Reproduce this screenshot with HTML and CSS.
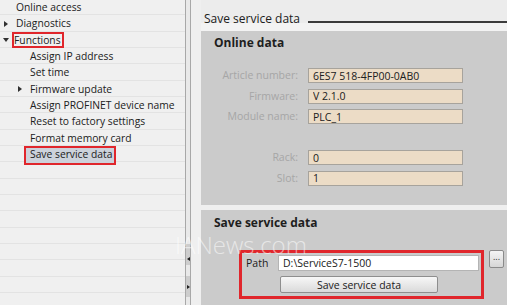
FILE: index.html
```html
<!DOCTYPE html>
<html lang="en">
<head>
    <meta charset="UTF-8">
    <title>Save service data</title>
    <link rel="stylesheet" href="styles.css">
</head>
<body>
<div class="tree">
    <div class="row l0">Online access</div>
    <div class="row l0"><span class="caret right"></span>Diagnostics</div>
    <div class="row l0"><span class="caret down"></span><span class="mark">Functions</span></div>
    <div class="row l1">Assign IP address</div>
    <div class="row l1">Set time</div>
    <div class="row l1"><span class="caret right"></span>Firmware update</div>
    <div class="row l1">Assign PROFINET device name</div>
    <div class="row l1">Reset to factory settings</div>
    <div class="row l1">Format memory card</div>
    <div class="row l1"><span class="mark selected">Save service data</span></div>
</div>
<div class="splitter">
    <div class="grip"><span class="arrow left"></span></div>
    <div class="grip"><span class="arrow right"></span></div>
</div>
<div class="main">
    <div class="title">
        <span>Save service data</span>
        <span class="rule"></span>
    </div>
    <div class="box online">
        <h2>Online data</h2>
        <div class="fields">
            <label>Article number:</label>
            <input type="text" class="field" value="6ES7 518-4FP00-0AB0" readonly>
            <label>Firmware:</label>
            <input type="text" class="field" value="V 2.1.0" readonly>
            <label>Module name:</label>
            <input type="text" class="field" value="PLC_1" readonly>
            <div class="blank"></div>
            <div class="blank"></div>
            <label>Rack:</label>
            <input type="text" class="field" value="0" readonly>
            <label>Slot:</label>
            <input type="text" class="field" value="1" readonly>
        </div>
    </div>
    <div class="box service">
        <h2>Save service data</h2>
        <div class="save-row">
            <div class="highlight">
                <div class="path-row">
                    <label>Path</label>
                    <input type="text" class="path" value="D:\ServiceS7-1500">
                </div>
                <button type="button" class="btn-save">Save service data</button>
            </div>
            <button type="button" class="btn-browse">...</button>
        </div>
    </div>
</div>
<div class="watermark">IANews.com</div>
</body>
</html>
```

FILE: styles.css
```css
body {
    margin: 0;
    width: 507px;
    height: 305px;
    overflow: hidden;
    display: flex;
    font-family: "Open Sans", Arial, sans-serif;
    font-size: 10.5px;
    color: #202020;
    position: relative;
}

.tree {
    width: 185px;
    flex-shrink: 0;
    font-size: 10.3px;
    background: repeating-linear-gradient(to bottom, #f0f0f0 0, #f0f0f0 15.3px, #e3e3e3 15.3px, #e3e3e3 16.33px);
    background-position: 0 -1px;
}

.row {
    height: 16.33px;
    line-height: 16.33px;
    white-space: nowrap;
    position: relative;
    top: -1px;
}

.row.l0 {
    padding-left: 16px;
}

.row.l1 {
    padding-left: 30px;
}

.caret {
    display: inline-block;
    width: 0;
    height: 0;
    vertical-align: middle;
    border-style: solid;
    border-color: transparent;
}

.caret.right {
    border-width: 3.5px 0 3.5px 4px;
    border-left-color: #303030;
    margin: 0 8px 2px -12px;
}

.caret.down {
    border-width: 4px 3px 0 3px;
    border-top-color: #303030;
    margin: 0 7px 2px -13px;
}

.mark {
    display: inline-block;
    height: 16.33px;
    padding: 0 3px 0 2px;
    margin-left: -4px;
    box-shadow: inset 0 0 0 2px #e0262c;
}

.mark.selected {
    padding: 0 4px 0 6px;
    margin-left: -6px;
    height: 19px;
    line-height: 17px;
    margin-top: -1px;
    background: #ccd2db;
}

.splitter {
    width: 4px;
    flex-shrink: 0;
    background: #e9e9e9;
    border-left: 1px solid #a8a8a8;
    border-right: 1px solid #a8a8a8;
    display: flex;
    flex-direction: column;
    justify-content: flex-end;
    gap: 11px;
    padding-bottom: 8px;
}

.grip {
    height: 21px;
    background: #cdcdcd;
    display: flex;
    align-items: flex-end;
    justify-content: center;
    padding-bottom: 4px;
    box-sizing: border-box;
}

.arrow {
    width: 0;
    height: 0;
    border-style: solid;
    border-color: transparent;
}

.arrow.left {
    border-width: 2.5px 3px 2.5px 0;
    border-right-color: #202020;
}

.arrow.right {
    border-width: 2.5px 0 2.5px 3px;
    border-left-color: #202020;
    margin-bottom: 4px;
}

.main {
    flex: 1;
    background: #efefef;
    padding-left: 10px;
    display: flex;
    flex-direction: column;
}

.title {
    height: 31px;
    display: flex;
    align-items: flex-start;
    gap: 8px;
    padding-left: 3px;
    font-size: 12px;
    background: linear-gradient(to bottom, #ececec 0, #ececec 23px, #f3f3f3 23px);
}

.title span:first-child {
    margin-top: 11px;
    line-height: 16px;
}

.title .rule {
    flex: 1;
    height: 2px;
    margin-top: 21px;
    background: #3c3c3c;
}

.box {
    background: #cbcbcb;
}

.box h2 {
    margin: 0;
    font-size: 12px;
    font-weight: bold;
    line-height: 16px;
    padding-left: 13px;
    color: #1e1e1e;
}

.online {
    height: 174px;
    padding-top: 4px;
    box-sizing: border-box;
}

.fields {
    margin-top: 17px;
    display: grid;
    grid-template-columns: 97px 155px;
    column-gap: 10px;
    row-gap: 5.5px;
}

.fields label {
    text-align: right;
    color: #a6a6a6;
    line-height: 15px;
}

.blank {
    height: 15px;
}

.field {
    height: 15px;
    box-sizing: border-box;
    margin: 0;
    padding: 0 4px;
    border: 1px solid #a7a39c;
    background: #ecdcc6;
    font-family: inherit;
    font-size: 10.5px;
    color: #202020;
    outline: none;
}

.service {
    flex: 1;
    margin-top: 5px;
    padding-top: 5px;
}

.save-row {
    margin-top: 19px;
    padding-left: 38px;
    display: flex;
    align-items: flex-start;
    gap: 5px;
}

.highlight {
    border: 3px solid #e0262c;
    padding: 2px 2px 3px 4px;
    display: flex;
    flex-direction: column;
    gap: 5px;
}

.path-row {
    display: flex;
    align-items: center;
}

.path-row label {
    width: 32px;
    line-height: 16px;
}

.path {
    width: 201px;
    height: 16px;
    box-sizing: border-box;
    margin: 0;
    padding: 0 4px;
    border: 1px solid #b4b4b4;
    background: #fff;
    font-family: inherit;
    font-size: 10.5px;
    color: #202020;
    outline: none;
}

.btn-save {
    margin-left: 34px;
    width: 158px;
    height: 17px;
    padding: 0;
    border: 1px solid #8e8e8e;
    border-radius: 2px;
    background: linear-gradient(to bottom, #f7f7f7, #dadada);
    font-family: inherit;
    font-size: 10.5px;
    color: #202020;
}

.btn-browse {
    width: 15px;
    height: 18px;
    padding: 0 0 4px;
    border: 1px solid #8a8a8a;
    border-radius: 2px;
    background: linear-gradient(to bottom, #f4f4f4, #d6d6d6);
    font-family: inherit;
    font-size: 9px;
    line-height: 10px;
    color: #303030;
}

.watermark {
    position: absolute;
    left: 175px;
    top: 228px;
    font-family: "Open Sans", Arial, sans-serif;
    font-size: 24px;
    font-weight: 300;
    color: rgba(255, 255, 255, 0.55);
    pointer-events: none;
}
```
